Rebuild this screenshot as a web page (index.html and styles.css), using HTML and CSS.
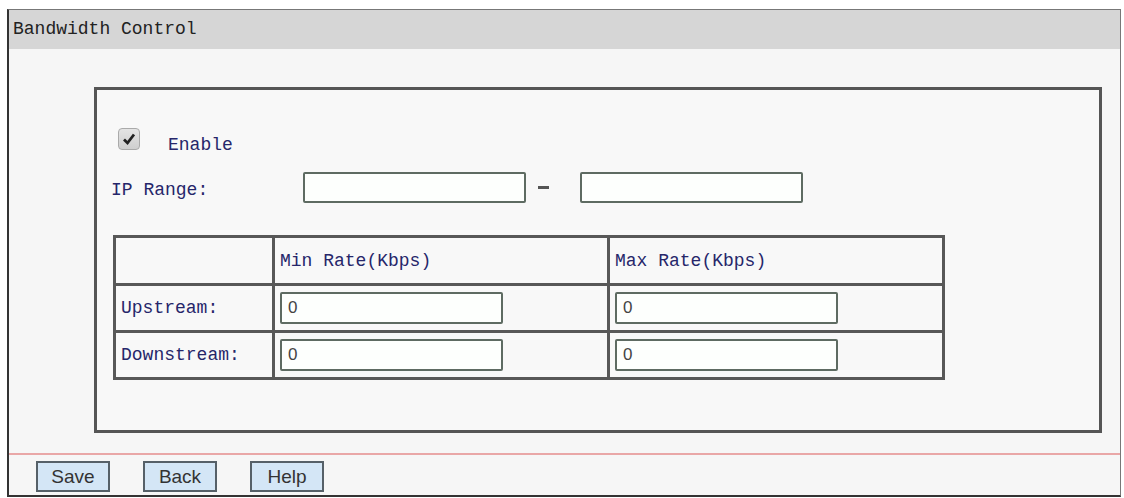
FILE: index.html
```html
<!DOCTYPE html>
<html lang="en">
<head>
  <meta charset="UTF-8">
  <title>Bandwidth Control</title>
  <link rel="stylesheet" href="styles.css">
</head>
<body>
  <div id="frame">
    <div class="title">Bandwidth Control</div>
    <div class="content">
      <div class="panel">
        <div class="enable-row">
          <span class="check">
            <svg width="14" height="14" viewBox="0 0 14 14"><path d="M2 7.5 L5.5 11 L12 2.5" fill="none" stroke="#222" stroke-width="2.8"/></svg>
          </span>
          <span class="label enable-label">Enable</span>
        </div>
        <div class="ip-row">
          <span class="label ip-label">IP Range:</span>
          <input class="box" type="text">
          <span class="dash"></span>
          <input class="box" type="text">
        </div>
        <table class="rates">
          <colgroup>
            <col style="width:159px">
            <col style="width:335px">
            <col style="width:335px">
          </colgroup>
          <tr class="head">
            <td></td>
            <td class="label">Min Rate(Kbps)</td>
            <td class="label">Max Rate(Kbps)</td>
          </tr>
          <tr>
            <td class="label">Upstream:</td>
            <td><input class="box" type="text" value="0"></td>
            <td><input class="box" type="text" value="0"></td>
          </tr>
          <tr>
            <td class="label">Downstream:</td>
            <td><input class="box" type="text" value="0"></td>
            <td><input class="box" type="text" value="0"></td>
          </tr>
        </table>
      </div>
    </div>
    <div class="line"></div>
    <div class="buttons">
      <button>Save</button>
      <button>Back</button>
      <button>Help</button>
    </div>
  </div>
</body>
</html>
```

FILE: styles.css
```css
* {
    margin: 0;
    padding: 0;
    box-sizing: border-box;
}

body {
    background: #fff;
    font-family: "Liberation Mono", monospace;
}

#frame {
    margin: 9px 0 0 7px;
    width: 1114px;
    height: 488px;
    border-left: 2px solid #333;
    border-top: 1px solid #777;
    border-right: 1px solid #777;
    border-bottom: 2px solid #333;
    background: #f6f6f6;
    display: flex;
    flex-direction: column;
}

.title {
    height: 39px;
    line-height: 38px;
    padding-left: 4px;
    background: #d6d6d6;
    color: #222;
    font-size: 18px;
}

.content {
    padding: 38px 18px 0 85px;
}

.panel {
    height: 346px;
    border: 3px solid #555;
    background: #f8f8f8;
    padding: 38px 0 0 14px;
}

.label {
    color: #26266a;
    font-size: 18px;
}

.enable-row {
    display: flex;
    align-items: center;
    gap: 28px;
    padding-left: 7px;
    height: 22px;
}

.enable-label {
    padding-top: 12px;
}

.check {
    width: 22px;
    height: 22px;
    border: 1px solid #aaa;
    border-radius: 4px;
    background: linear-gradient(#e4e4e4, #cfcfcf);
    display: flex;
    align-items: center;
    justify-content: center;
}

.ip-row {
    display: flex;
    align-items: center;
    margin-top: 22px;
}

.ip-label {
    width: 192px;
    padding-top: 5px;
}

.box {
    width: 223px;
    height: 31px;
    border: 2px solid #5e6b62;
    border-radius: 2px;
    background: #fdfffd;
    font-family: "Liberation Sans", Arial, sans-serif;
    font-size: 17px;
    color: #444;
    padding-left: 6px;
    outline: none;
}

.dash {
    width: 11px;
    height: 3px;
    background: #555;
    margin: 0 31px 0 12px;
}

.rates {
    margin: 32px 0 0 2px;
    width: 829px;
    border-collapse: collapse;
    table-layout: fixed;
}

.rates td {
    border: 3px solid #585858;
    height: 47px;
    padding-left: 5px;
    vertical-align: middle;
}

.rates .head td {
    height: 48px;
}

.rates td .box {
    display: block;
    height: 32px;
}

.line {
    margin-top: 20px;
    height: 2px;
    background: #e9a7a7;
}

.buttons {
    display: flex;
    gap: 33px;
    padding: 6px 0 0 27px;
}

.buttons button {
    width: 74px;
    height: 31px;
    border: 2px solid #566068;
    background: #d4e6f6;
    color: #333;
    font-family: "Liberation Sans", Arial, sans-serif;
    font-size: 19px;
}
```
